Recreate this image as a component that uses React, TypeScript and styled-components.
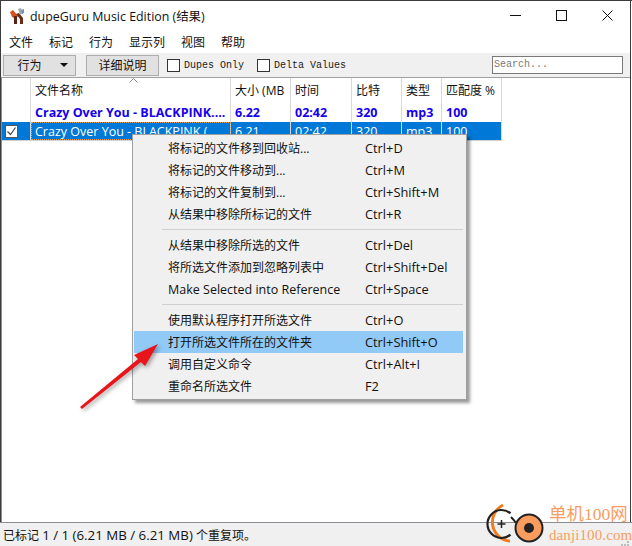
import { FC } from "react";
import styled, { createGlobalStyle } from "styled-components";

const sans = `"Open Sans", "Noto Sans CJK SC", sans-serif`;

const GlobalStyle = createGlobalStyle`
  html, body {
    margin: 0;
    padding: 0;
    background: #fff;
  }
  * {
    box-sizing: border-box;
  }
`;

const Frame = styled.div`
  position: relative;
  width: 632px;
  height: 546px;
  overflow: hidden;
  display: flex;
  flex-direction: column;
  background: #fff;
  border-top: 1px solid #3c3c3c;
  font-family: ${sans};
  color: #111;
`;

const Main = styled.div`
  flex: 1;
  min-height: 0;
  margin-right: 1px;
  display: flex;
  flex-direction: column;
  border-left: 1px solid #3c3c3c;
  border-right: 1px solid #3c3c3c;
`;

const TitleBar = styled.div`
  height: 29px;
  display: flex;
  align-items: center;
  padding-left: 8px;
`;

const Title = styled.span`
  margin-left: 4px;
  font-size: 12.4px;
`;

const WindowButtons = styled.div`
  margin-left: auto;
  display: flex;
`;

const WindowButton = styled.div`
  width: 46px;
  height: 29px;
  display: flex;
  align-items: center;
  justify-content: center;
`;

const MenuBar = styled.div`
  height: 23px;
  display: flex;
  align-items: center;
  gap: 16px;
  padding-left: 8px;
  font-size: 12px;
`;

const Toolbar = styled.div`
  height: 25px;
  display: flex;
  align-items: center;
  background: #f0f0f0;
  border-bottom: 1px solid #a0a0a0;
  padding-left: 2px;
`;

const ToolButton = styled.div<{ $w: number; $ml?: number; $pl?: number }>`
  width: ${({ $w }) => $w}px;
  height: 21px;
  margin-left: ${({ $ml }) => $ml ?? 0}px;
  padding-left: ${({ $pl }) => $pl ?? 0}px;
  display: flex;
  align-items: center;
  justify-content: center;
  gap: 18px;
  background: #e1e1e1;
  border: 1px solid #adadad;
  font-size: 12px;
`;

const Caret = styled.span`
  width: 0;
  height: 0;
  border-left: 4px solid transparent;
  border-right: 4px solid transparent;
  border-top: 4px solid #111;
`;

const CheckLabel = styled.label<{ $ml: number }>`
  margin-left: ${({ $ml }) => $ml}px;
  display: flex;
  align-items: center;
  gap: 4px;
  font-family: "Liberation Mono", monospace;
  font-size: 10px;
  color: #222;
`;

const CheckBox = styled.span`
  width: 13px;
  height: 13px;
  background: #fff;
  border: 1px solid #333;
`;

const Search = styled.div`
  margin-left: auto;
  margin-right: 7px;
  width: 131px;
  height: 18px;
  padding-left: 1px;
  background: #fff;
  border: 1px solid #7a7a7a;
  color: #777;
  font-family: "Liberation Mono", monospace;
  font-size: 10px;
  line-height: 15px;
`;

const TableArea = styled.div`
  flex: 1;
  border-left: 1px solid #8c8c8c;
  min-height: 0;
`;

const Table = styled.div`
  width: 500px;
  border-bottom: 1px solid #d0d0d0;
`;

const Row = styled.div<{ $h: number; $selected?: boolean }>`
  height: ${({ $h }) => $h}px;
  display: grid;
  grid-template-columns: 29px 200px 60px 61px 50px 40px 60px;
  background: ${({ $selected }) => ($selected ? "#0078d7" : "transparent")};
`;

const cellLineHeight = { head: "25px", marked: "18px", selected: "20px" };

const Cell = styled.div<{ $kind: "head" | "marked" | "selected" }>`
  padding-left: 4px;
  border-right: 1px solid #d8d8d8;
  white-space: nowrap;
  overflow: hidden;
  font-size: ${({ $kind }) => ($kind === "head" ? "12px" : "12.5px")};
  font-weight: ${({ $kind }) => ($kind === "marked" ? 700 : 400)};
  color: ${({ $kind }) =>
    $kind === "marked" ? "#1400f0" : $kind === "selected" ? "#fff" : "#111"};
  line-height: ${({ $kind }) => cellLineHeight[$kind]};
`;

const FocusCell = styled(Cell)`
  outline: 1px dotted #e0a060;
  outline-offset: -1px;
`;

const CheckCell = styled.div`
  display: flex;
  align-items: center;
  padding-left: 3px;
  border-right: 1px solid #d8d8d8;
`;

const SortMark = styled.svg`
  position: absolute;
  left: 129px;
  top: 77px;
`;

const StatusBar = styled.div`
  height: 24px;
  display: flex;
  align-items: center;
  padding-left: 3px;
  background: #f0f0f0;
  border-top: 1px solid #8c8c92;
  font-size: 12px;
  white-space: pre;
`;

const StatusFigures = styled.span`
  font-size: 13.3px;
`;

const Grip = styled.svg`
  position: absolute;
  right: 3px;
  bottom: 0;
`;

const ContextMenu = styled.div`
  position: absolute;
  left: 132px;
  top: 133px;
  width: 335px;
  height: 266px;
  padding: 2px 3px 2px 1px;
  background: #f0f0f0;
  border: 1px solid #a0a0a0;
  box-shadow: 3px 3px 3px rgba(0, 0, 0, 0.4);
  font-size: 12px;
`;

const MenuItem = styled.div<{ $active?: boolean }>`
  height: 22px;
  display: grid;
  grid-template-columns: 197px 1fr;
  align-items: center;
  padding-left: 34px;
  background: ${({ $active }) => ($active ? "#91c9f7" : "transparent")};
`;

const MenuLabel = styled.span<{ $latin?: boolean }>`
  font-size: ${({ $latin }) => ($latin ? "12.5px" : "12px")};
  white-space: nowrap;
`;

const MenuKeys = styled.span`
  font-size: 12.8px;
  white-space: nowrap;
`;

const Separator = styled.div`
  height: 1px;
  margin: 4px 0 4px 28px;
  background: #d0d0d0;
`;

const Arrow = styled.svg`
  position: absolute;
  left: 71px;
  top: 335px;
  filter: drop-shadow(2px 2px 2px rgba(0, 0, 0, 0.35));
`;

const Watermark = styled.div`
  position: absolute;
  right: 1px;
  bottom: 0;
  width: 150px;
  height: 56px;
`;

const WatermarkTitle = styled.div`
  position: absolute;
  left: 68px;
  top: 16px;
  color: #fb9c5f;
  font-size: 17.5px;
  font-family: "Liberation Serif", "Noto Sans CJK SC", serif;
  line-height: 1;
  white-space: nowrap;
`;

const WatermarkUrl = styled.div`
  position: absolute;
  left: 68px;
  top: 38px;
  color: #fb9c5f;
  font-size: 15px;
  letter-spacing: 0.1px;
  font-family: "Liberation Serif", serif;
  line-height: 1;
  white-space: nowrap;
`;

const AppIcon: FC = () => (
  <svg width="17" height="18" viewBox="0 0 17 18">
    <path d="M1 5 L4 3 L9 9 L7 12 L3 10 Z" fill="#d9531e" />
    <path d="M5 9 L8 9 L8 17 L5 17 Z" fill="#5a2414" />
    <path d="M7 7 L10 6 L14 11 L14 17 L11 17 L11 12 Z" fill="#6b2c18" />
    <path d="M9 2 L12 1 L14 6 L11 8 Z" fill="#a8a8a8" />
    <path d="M12 3 L15 2 L15 6 L13 7 Z" fill="#6d93c4" />
  </svg>
);

const CheckMark: FC = () => (
  <svg width="13" height="13" viewBox="0 0 13 13">
    <rect x="0.5" y="0.5" width="12" height="12" fill="#fff" stroke="#555" />
    <path d="M2.5 6.5 L5.5 9.5 L10.5 2.5" fill="none" stroke="#444" strokeWidth="1.2" />
  </svg>
);

const menuGroups = [
  [
    ["将标记的文件移到回收站...", "Ctrl+D"],
    ["将标记的文件移动到...", "Ctrl+M"],
    ["将标记的文件复制到...", "Ctrl+Shift+M"],
    ["从结果中移除所标记的文件", "Ctrl+R"],
  ],
  [
    ["从结果中移除所选的文件", "Ctrl+Del"],
    ["将所选文件添加到忽略列表中", "Ctrl+Shift+Del"],
    ["Make Selected into Reference", "Ctrl+Space"],
  ],
  [
    ["使用默认程序打开所选文件", "Ctrl+O"],
    ["打开所选文件所在的文件夹", "Ctrl+Shift+O"],
    ["调用自定义命令", "Ctrl+Alt+I"],
    ["重命名所选文件", "F2"],
  ],
];

const App: FC = () => (
  <>
    <GlobalStyle />
    <Frame>
      <Main>
        <TitleBar>
          <AppIcon />
          <Title>dupeGuru Music Edition (结果)</Title>
          <WindowButtons>
            <WindowButton>
              <svg width="11" height="11" viewBox="0 0 11 11">
                <path d="M0 5.5 H11" stroke="#111" />
              </svg>
            </WindowButton>
            <WindowButton>
              <svg width="11" height="11" viewBox="0 0 11 11">
                <rect x="0.5" y="0.5" width="10" height="10" fill="none" stroke="#111" />
              </svg>
            </WindowButton>
            <WindowButton>
              <svg width="11" height="11" viewBox="0 0 11 11">
                <path d="M0.5 0.5 L10.5 10.5 M10.5 0.5 L0.5 10.5" stroke="#111" />
              </svg>
            </WindowButton>
          </WindowButtons>
        </TitleBar>
        <MenuBar>
          <span>文件</span>
          <span>标记</span>
          <span>行为</span>
          <span>显示列</span>
          <span>视图</span>
          <span>帮助</span>
        </MenuBar>
        <Toolbar>
          <ToolButton $w={73} $pl={6}>
            行为
            <Caret />
          </ToolButton>
          <ToolButton $w={73} $ml={10}>
            详细说明
          </ToolButton>
          <CheckLabel $ml={8}>
            <CheckBox />
            Dupes Only
          </CheckLabel>
          <CheckLabel $ml={13}>
            <CheckBox />
            Delta Values
          </CheckLabel>
          <Search>Search...</Search>
        </Toolbar>
        <TableArea>
          <Table>
            <Row $h={26}>
              <Cell $kind="head" />
              <Cell $kind="head">文件名称</Cell>
              <Cell $kind="head">大小 (MB</Cell>
              <Cell $kind="head">时间</Cell>
              <Cell $kind="head">比特</Cell>
              <Cell $kind="head">类型</Cell>
              <Cell $kind="head">匹配度 %</Cell>
            </Row>
            <Row $h={18}>
              <Cell $kind="marked" />
              <Cell $kind="marked">Crazy Over You - BLACKPINK....</Cell>
              <Cell $kind="marked">6.22</Cell>
              <Cell $kind="marked">02:42</Cell>
              <Cell $kind="marked">320</Cell>
              <Cell $kind="marked">mp3</Cell>
              <Cell $kind="marked">100</Cell>
            </Row>
            <Row $h={18} $selected>
              <CheckCell>
                <CheckMark />
              </CheckCell>
              <FocusCell $kind="selected">Crazy Over You - BLACKPINK (</FocusCell>
              <Cell $kind="selected">6.21</Cell>
              <Cell $kind="selected">02:42</Cell>
              <Cell $kind="selected">320</Cell>
              <Cell $kind="selected">mp3</Cell>
              <Cell $kind="selected">100</Cell>
            </Row>
          </Table>
        </TableArea>
      </Main>
      <StatusBar>
        已标记 <StatusFigures>1 / 1 (6.21 MB / 6.21 MB)</StatusFigures> 个重复项。
      </StatusBar>
      <Grip width="9" height="5" viewBox="0 0 9 5">
        <path d="M7 0 h2 v2 h-2 z M4 3 h2 v2 h-2 z M7 3 h2 v2 h-2 z M1 3 h2 v2 h-2 z" fill="#bdbdbd" />
      </Grip>
      <SortMark width="9" height="5" viewBox="0 0 9 5">
        <path d="M0.5 4.5 L4.5 0.5 L8.5 4.5" fill="none" stroke="#888" />
      </SortMark>
      <ContextMenu>
        {menuGroups.map((group, i) => (
          <div key={i}>
            {i > 0 && <Separator />}
            {group.map(([label, keys]) => (
              <MenuItem key={label} $active={label === "打开所选文件所在的文件夹"}>
                <MenuLabel $latin={label.startsWith("Make")}>{label}</MenuLabel>
                <MenuKeys>{keys}</MenuKeys>
              </MenuItem>
            ))}
          </div>
        ))}
      </ContextMenu>
      <Arrow width="100" height="85" viewBox="0 0 100 85">
        <path d="M9 71 L11 73 L70 26 L74 30 L87 8 L63 19 L67 23 Z" fill="#e8161a" />
      </Arrow>
      <Watermark>
        <svg width="70" height="56" viewBox="0 0 70 56">
          <path d="M22 15 A19 19 0 0 0 29 51" fill="none" stroke="#f47a1f" strokeWidth="3" />
          <path d="M29.5 23.3 A14 14 0 1 0 29.5 44.7" fill="none" stroke="#222" strokeWidth="2.2" />
          <path d="M16.5 34 H24.5 M20.5 30 V38" stroke="#222" strokeWidth="1.5" />
          <path d="M30 27 Q33 30 35 33" fill="none" stroke="#222" strokeWidth="2" />
          <circle cx="48" cy="38" r="13.5" fill="#fb9c5f" stroke="#222" strokeWidth="2" />
          <circle cx="48" cy="38" r="5" fill="#222" />
        </svg>
        <WatermarkTitle>单机100网</WatermarkTitle>
        <WatermarkUrl>danji100.com</WatermarkUrl>
      </Watermark>
    </Frame>
  </>
);

export default App;
